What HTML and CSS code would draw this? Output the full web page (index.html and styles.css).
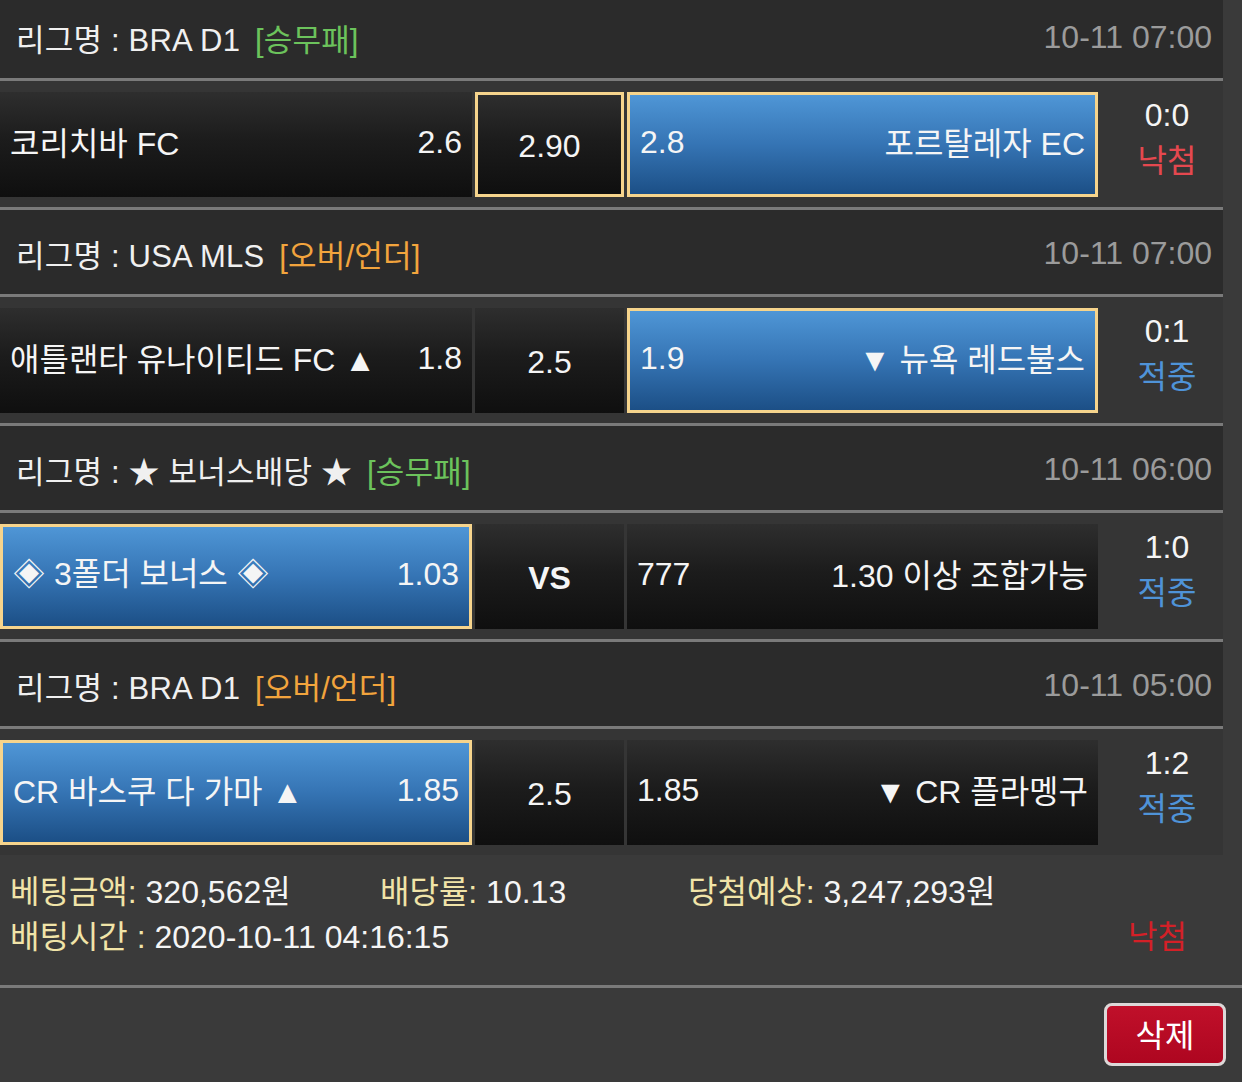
FILE: index.html
```html
<!DOCTYPE html>
<html lang="ko">
<head>
<meta charset="utf-8">
<title>배팅내역</title>
<link rel="stylesheet" href="styles.css">
</head>
<body>
<div class="page">
  <div class="list">
    <section class="game">
      <div class="league">
        <div class="league-name">리그명 : BRA D1 <span class="type win">[승무패]</span></div>
        <div class="date">10-11 07:00</div>
      </div>
      <div class="match">
        <div class="cell home"><span class="team">코리치바 FC</span><span class="odd">2.6</span></div>
        <div class="cell draw picked-dark">2.90</div>
        <div class="cell away picked"><span class="odd">2.8</span><span class="team">포르탈레자 EC</span></div>
        <div class="score"><div>0:0</div><div class="lose">낙첨</div></div>
      </div>
    </section>

    <section class="game">
      <div class="league">
        <div class="league-name">리그명 : USA MLS <span class="type ou">[오버/언더]</span></div>
        <div class="date">10-11 07:00</div>
      </div>
      <div class="match">
        <div class="cell home"><span class="team">애틀랜타 유나이티드 FC ▲</span><span class="odd">1.8</span></div>
        <div class="cell draw">2.5</div>
        <div class="cell away picked"><span class="odd">1.9</span><span class="team">▼ 뉴욕 레드불스</span></div>
        <div class="score"><div>0:1</div><div class="hit">적중</div></div>
      </div>
    </section>

    <section class="game">
      <div class="league">
        <div class="league-name">리그명 : ★ 보너스배당 ★ <span class="type win">[승무패]</span></div>
        <div class="date">10-11 06:00</div>
      </div>
      <div class="match">
        <div class="cell home picked"><span class="team">◈ 3폴더 보너스 ◈</span><span class="odd">1.03</span></div>
        <div class="cell draw vs">VS</div>
        <div class="cell away"><span class="odd">777</span><span class="team">1.30 이상 조합가능</span></div>
        <div class="score"><div>1:0</div><div class="hit">적중</div></div>
      </div>
    </section>

    <section class="game">
      <div class="league">
        <div class="league-name">리그명 : BRA D1 <span class="type ou">[오버/언더]</span></div>
        <div class="date">10-11 05:00</div>
      </div>
      <div class="match">
        <div class="cell home picked"><span class="team">CR 바스쿠 다 가마 ▲</span><span class="odd">1.85</span></div>
        <div class="cell draw">2.5</div>
        <div class="cell away"><span class="odd">1.85</span><span class="team">▼ CR 플라멩구</span></div>
        <div class="score"><div>1:2</div><div class="hit">적중</div></div>
      </div>
    </section>
  </div>

  <div class="summary">
    <div class="sum-row">
      <div class="sum-item sum-amount"><span class="label">베팅금액:</span> 320,562원</div>
      <div class="sum-item sum-rate"><span class="label">배당률:</span> 10.13</div>
      <div class="sum-item"><span class="label">당첨예상:</span> 3,247,293원</div>
    </div>
    <div class="sum-row sum-row2">
      <div class="sum-item"><span class="label">배팅시간 :</span> 2020-10-11 04:16:15</div>
      <div class="result-lose">낙첨</div>
    </div>
  </div>

  <div class="actions">
    <button class="btn-delete" type="button">삭제</button>
  </div>
</div>
</body>
</html>
```

FILE: styles.css
```css
html, body {
  margin: 0;
  padding: 0;
  background: #3a3a3a;
}

body {
  font-family: "Liberation Sans", "Noto Sans CJK KR", sans-serif;
  color: #f2f2f2;
  font-size: 32px;
  overflow: hidden;
  height: 1082px;
}

.page {
  width: 1242px;
}

.list {
  width: 1223px;
  margin-top: -6px;
}

.league {
  height: 84px;
  background: #2b2b2b;
  display: flex;
  align-items: center;
  justify-content: space-between;
  padding: 2px 11px 0 16px;
  box-sizing: border-box;
}

.game + .game .league {
  height: 87px;
  border-top: 3px solid #7a7a7a;
}

.league-name {
  color: #f0f0f0;
  font-size: 31px;
  white-space: pre;
  letter-spacing: 0.2px;
}

.type {
  margin-left: 6px;
}

.type.win { color: #6cc35c; }
.type.ou { color: #f2a43d; }

.date {
  color: #9b9b9b;
  font-size: 32px;
}

.match {
  border-top: 3px solid #7a7a7a;
  background: #353535;
  display: flex;
  align-items: flex-start;
  gap: 3px;
  padding: 11px 0 10px;
}

.cell {
  height: 105px;
  box-sizing: border-box;
  display: flex;
  align-items: center;
  justify-content: space-between;
  padding: 0 10px 4px;
  background: linear-gradient(to bottom, #2e2e2e 0%, #1c1c1c 45%, #0f0f0f 100%);
  color: #f5f5f5;
  font-size: 32px;
  white-space: nowrap;
}

.team {
  padding-bottom: 4px;
}

.home { width: 472px; }
.away { width: 471px; }

.draw {
  width: 149px;
  justify-content: center;
  padding: 4px 0 0;
}

.vs {
  font-weight: bold;
}

.picked {
  background: linear-gradient(to bottom, #4f96d6 0%, #3574b4 50%, #1c4f86 100%);
  border: 3px solid #f6d48c;
}

.picked-dark {
  border: 3px solid #f6d48c;
}

.score {
  flex: 1;
  padding-left: 10px;
  text-align: center;
  line-height: 46px;
  font-size: 32px;
  color: #f5f5f5;
}

.lose { color: #e5484f; }
.hit { color: #4f93d8; }

.summary {
  width: 1223px;
  padding: 15px 0 25px 10px;
  box-sizing: border-box;
}

.sum-row {
  display: flex;
  line-height: 45px;
  font-size: 32px;
  color: #f5f5f5;
}

.sum-amount { width: 370px; }
.sum-rate { width: 308px; }

.label { color: #f1e4a8; }

.sum-row2 {
  justify-content: space-between;
  padding-right: 36px;
}

.result-lose {
  color: #d32027;
}

.actions {
  border-top: 3px solid #7a7a7a;
  display: flex;
  justify-content: flex-end;
  padding: 15px 16px 0 0;
}

.btn-delete {
  width: 122px;
  height: 63px;
  background: linear-gradient(to bottom, #c0102a 0%, #ae0620 100%);
  border: 3px solid #dcd8d8;
  border-radius: 8px;
  color: #ffffff;
  font-family: "Liberation Sans", "Noto Sans CJK KR", sans-serif;
  font-size: 32px;
  padding: 0 0 4px;
}
```
